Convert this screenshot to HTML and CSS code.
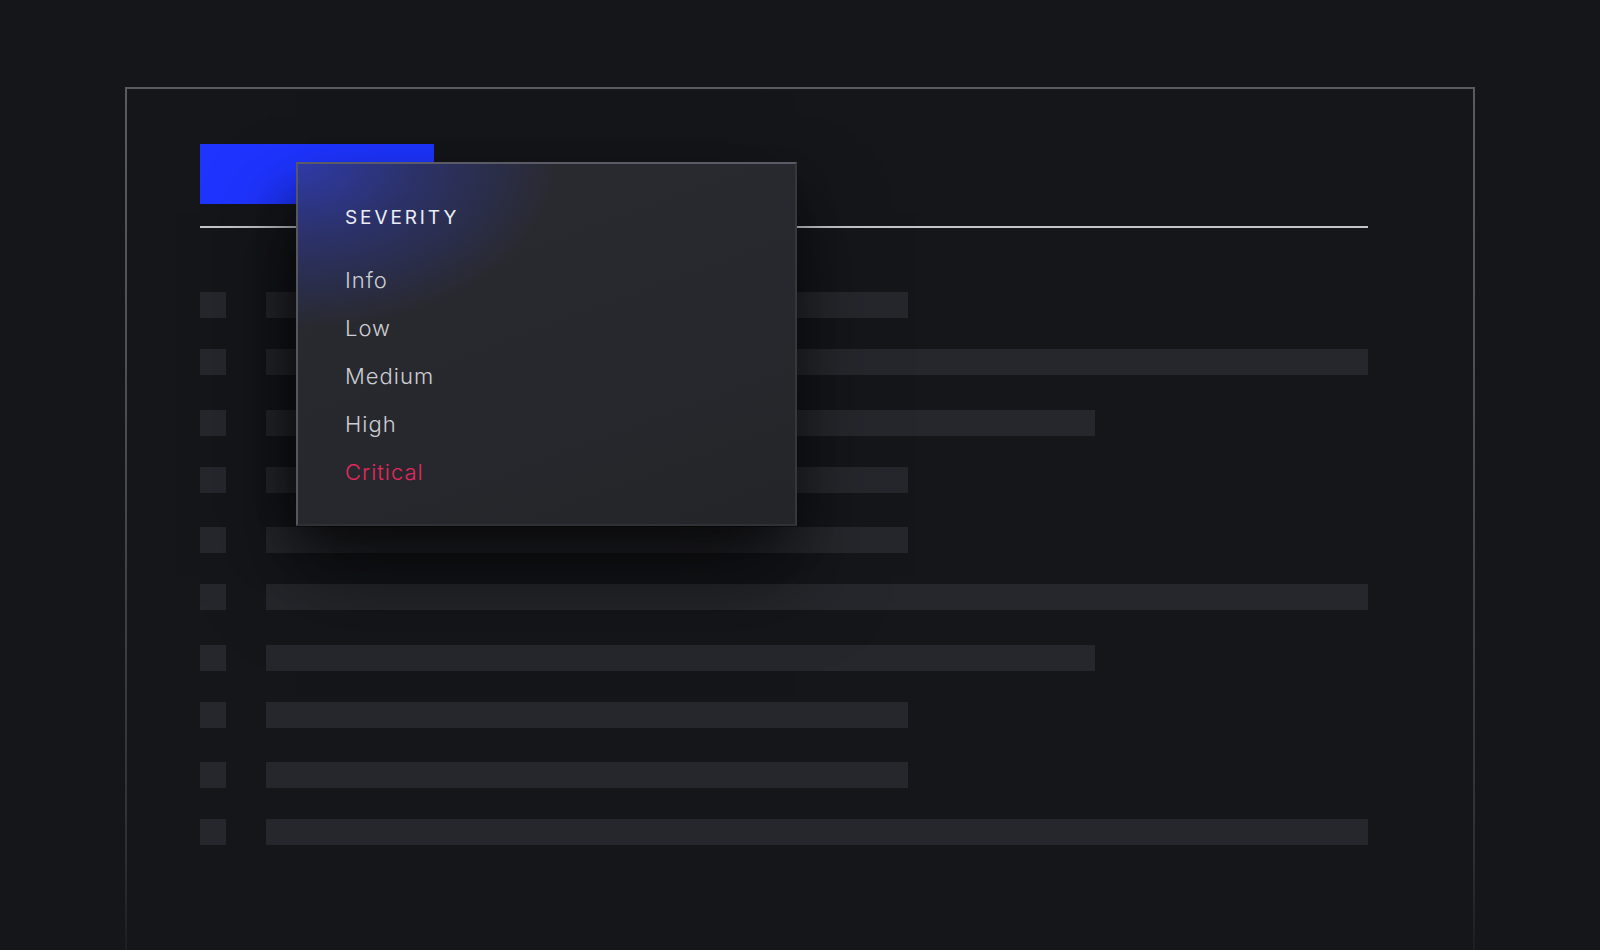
FILE: index.html
```html
<!DOCTYPE html>
<html lang="en">
<head>
<meta charset="utf-8">
<title>Severity filter</title>
<link rel="stylesheet" href="styles.css">
</head>
<body>
<div class="stage">
  <div class="frame">
    <div class="content">
      <div class="tab"></div>
      <div class="rule"></div>
      <div class="rows">
        <div class="row"><span class="sq"></span><span class="bar" style="width:642px"></span></div>
        <div class="row"><span class="sq"></span><span class="bar" style="width:1102px"></span></div>
        <div class="row"><span class="sq"></span><span class="bar" style="width:829px"></span></div>
        <div class="row"><span class="sq"></span><span class="bar" style="width:642px"></span></div>
        <div class="row"><span class="sq"></span><span class="bar" style="width:642px"></span></div>
        <div class="row"><span class="sq"></span><span class="bar" style="width:1102px"></span></div>
        <div class="row"><span class="sq"></span><span class="bar" style="width:829px"></span></div>
        <div class="row"><span class="sq"></span><span class="bar" style="width:642px"></span></div>
        <div class="row"><span class="sq"></span><span class="bar" style="width:642px"></span></div>
        <div class="row"><span class="sq"></span><span class="bar" style="width:1102px"></span></div>
      </div>
      <div class="menu">
        <div class="menu-title">SEVERITY</div>
        <ul class="menu-list">
          <li class="menu-item">Info</li>
          <li class="menu-item">Low</li>
          <li class="menu-item">Medium</li>
          <li class="menu-item">High</li>
          <li class="menu-item critical">Critical</li>
        </ul>
      </div>
    </div>
  </div>
</div>
</body>
</html>
```

FILE: styles.css
```css
html, body {
  margin: 0;
  padding: 0;
  height: 100%;
  overflow: hidden;
  background: #15161a;
  font-family: Inter, "Noto Sans", "Liberation Sans", sans-serif;
}

.stage {
  padding: 87px 125px 0 125px;
}

.frame {
  box-sizing: border-box;
  width: 1350px;
  height: 900px;
  border: 2px solid #58595d;
  border-image: linear-gradient(to bottom, #5a5b5f 0%, #4c4d52 35%, #2e2f34 85%, rgba(40,41,46,0) 100%) 1;
  border-bottom: none;
  padding: 55px 105px 0 73px;
}

.content {
  position: relative;
  display: flex;
  flex-direction: column;
}

.tab {
  width: 234px;
  height: 60px;
  background: #1f35ff;
}

.rule {
  height: 2px;
  margin-top: 22px;
  background: #c4c5c9;
}

.rows {
  display: flex;
  flex-direction: column;
  margin-top: 64px;
}

.row {
  display: flex;
  align-items: center;
  gap: 40px;
  height: 26px;
  margin-bottom: 31px;
}

.row:nth-child(even) {
  margin-bottom: 34.5px;
}

.sq {
  width: 26px;
  height: 26px;
  background: #26272c;
  flex: none;
}

.bar {
  height: 26px;
  background: #26272c;
  flex: none;
}

.menu {
  position: absolute;
  left: 96px;
  top: 18px;
  box-sizing: border-box;
  width: 501px;
  height: 364px;
  padding: 44px 47px 28px;
  border: 2px solid;
  border-color: #5a5b66 #36373c #303136 #55565f;
  background:
    radial-gradient(ellipse 260px 165px at 0% 0%, rgba(48, 64, 215, 0.72) 0%, rgba(48, 64, 215, 0.36) 42%, rgba(48, 64, 215, 0) 100%),
    linear-gradient(160deg, #2a2b30 0%, #27282d 60%, #242529 100%);
  box-shadow: 0 50px 80px 0 rgba(0, 0, 0, 0.5), 0 20px 40px -10px rgba(0, 0, 0, 0.4), -30px 30px 60px -20px rgba(0, 0, 0, 0.35);
}

.menu-title {
  font-size: 19px;
  line-height: 20px;
  letter-spacing: 2.9px;
  font-weight: 400;
  color: #eceef5;
}

.menu-list {
  list-style: none;
  margin: 28px 0 0;
  padding: 0;
}

.menu-item {
  font-size: 22px;
  line-height: 48px;
  letter-spacing: 1px;
  font-weight: 300;
  color: #cdced3;
}

.menu-item.critical {
  color: #e5285f;
}
```
